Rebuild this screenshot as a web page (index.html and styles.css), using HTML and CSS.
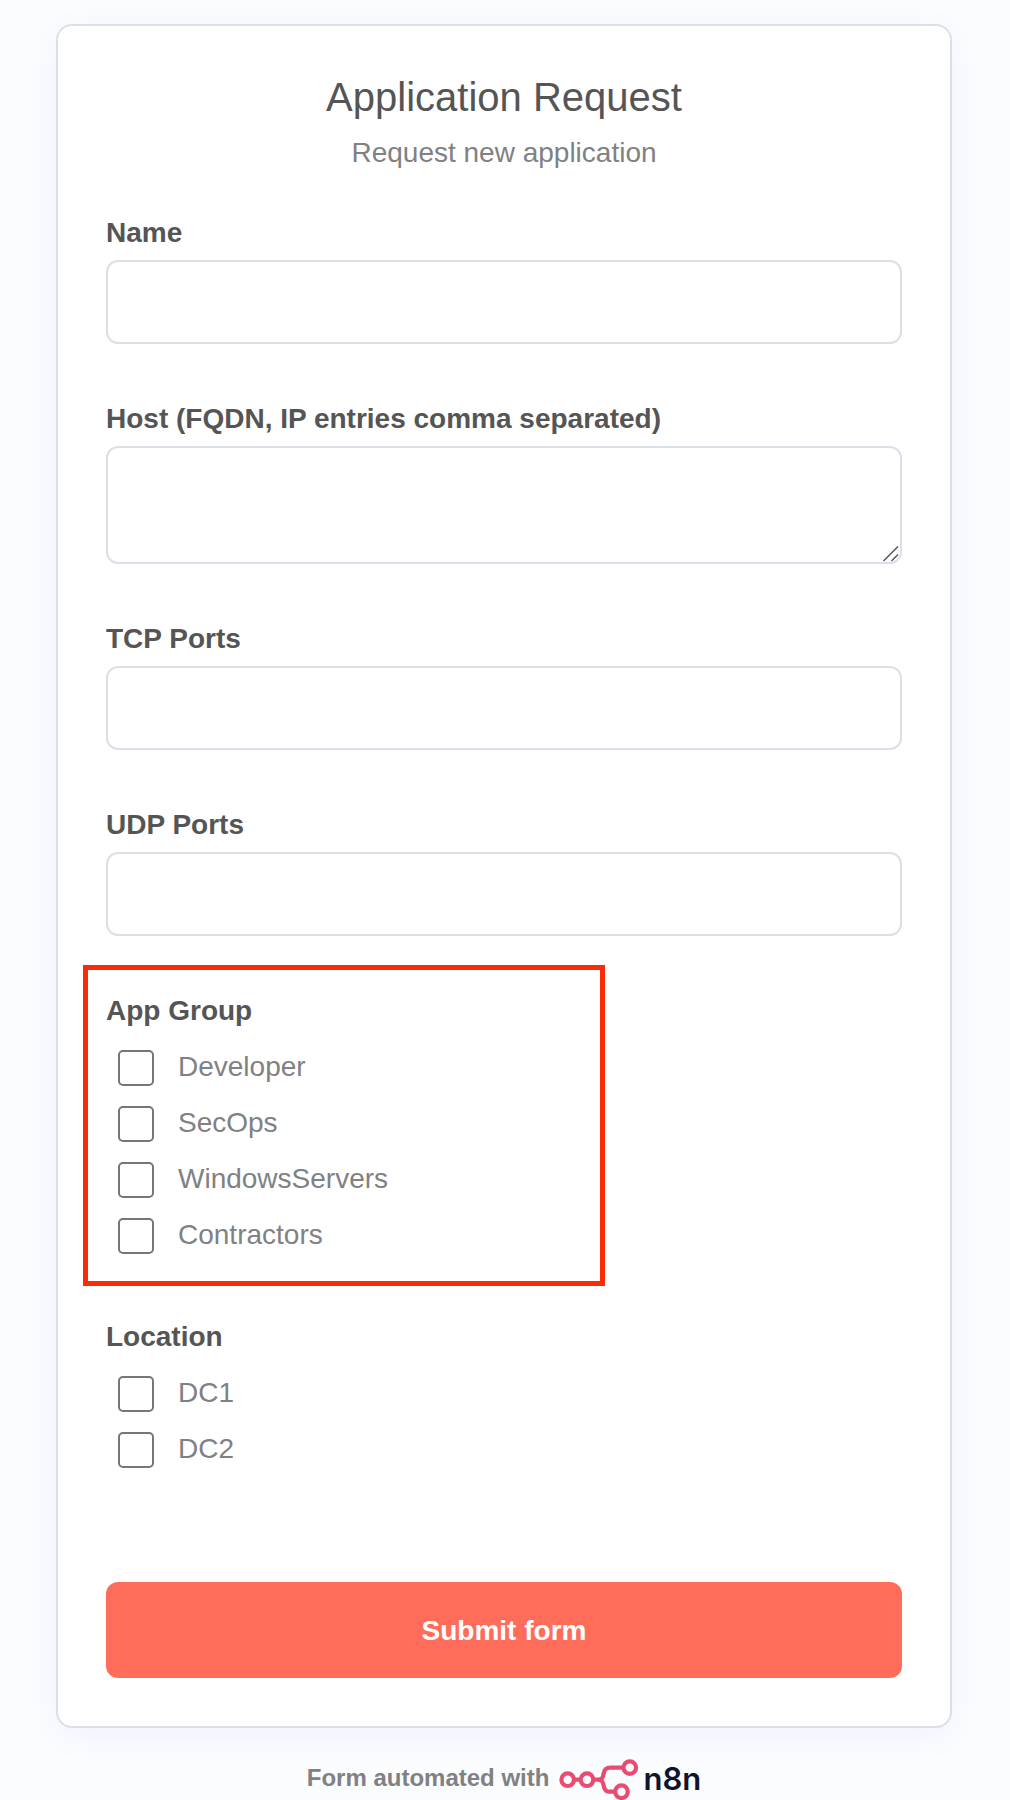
FILE: index.html
```html
<!DOCTYPE html>
<html lang="en">

<head>
    <meta charset="UTF-8">
    <meta name="viewport" content="width=device-width, initial-scale=1.0">
    <title>Application Request</title>
    <link rel="stylesheet" href="styles.css">
</head>

<body>
    <main class="container">
        <form class="card" action="#" method="post">
            <div class="form-header">
                <h1>Application Request</h1>
                <p>Request new application</p>
            </div>

            <div class="form-group">
                <label class="form-label" for="name">Name</label>
                <input class="form-input" type="text" id="name" name="name">
            </div>
            <div class="form-group">
                <label class="form-label" for="host">Host (FQDN, IP entries comma separated)</label>
                <textarea class="form-input form-textarea" id="host" name="host"></textarea>
            </div>
            <div class="form-group">
                <label class="form-label" for="tcp">TCP Ports</label>
                <input class="form-input" type="text" id="tcp" name="tcp">
            </div>
            <div class="form-group">
                <label class="form-label" for="udp">UDP Ports</label>
                <input class="form-input" type="text" id="udp" name="udp">
            </div>

            <div class="form-group highlight">
                <fieldset class="multiselect">
                    <legend class="form-label">App Group</legend>
                    <div class="options">
                        <div class="option">
                            <input type="checkbox" id="developer" name="group" value="Developer">
                            <label for="developer">Developer</label>
                        </div>
                        <div class="option">
                            <input type="checkbox" id="secops" name="group" value="SecOps">
                            <label for="secops">SecOps</label>
                        </div>
                        <div class="option">
                            <input type="checkbox" id="windows" name="group" value="WindowsServers">
                            <label for="windows">WindowsServers</label>
                        </div>
                        <div class="option">
                            <input type="checkbox" id="contractors" name="group" value="Contractors">
                            <label for="contractors">Contractors</label>
                        </div>
                    </div>
                </fieldset>
            </div>

            <div class="form-group">
                <fieldset class="multiselect">
                    <legend class="form-label">Location</legend>
                    <div class="options">
                        <div class="option">
                            <input type="checkbox" id="dc1" name="location" value="DC1">
                            <label for="dc1">DC1</label>
                        </div>
                        <div class="option">
                            <input type="checkbox" id="dc2" name="location" value="DC2">
                            <label for="dc2">DC2</label>
                        </div>
                    </div>
                </fieldset>
            </div>

            <button class="submit-btn" type="submit">Submit form</button>
        </form>

        <a class="n8n-link" href="#">
            <span class="n8n-text">Form automated with</span>
            <svg class="n8n-logo" width="80" height="42" viewBox="0 0 80 42" fill="none" stroke="#ea4b71" stroke-width="4.2" aria-hidden="true">
                <circle cx="8.7" cy="21.7" r="6.3" />
                <circle cx="28" cy="21.7" r="6.3" />
                <circle cx="70.8" cy="9.6" r="6.3" />
                <circle cx="62.5" cy="33.7" r="6.3" />
                <path d="M15 21.7H22M34 21.7H39.5C42.5 21.7 43.8 19.8 44.4 16.8L44.9 14.5C45.6 11.4 47.6 9.6 51 9.6H64.5" />
                <path d="M39.5 21.7C42.5 21.7 43.8 23.6 44.4 26.6L45 29C45.7 32 47.5 33.7 50.5 33.7H56.5" />
            </svg>
            <span class="n8n-name">n8n</span>
        </a>
    </main>
</body>

</html>
```
FILE: styles.css
```css
* {
    box-sizing: border-box;
    margin: 0;
    padding: 0;
}

body {
    background-color: #fbfcfe;
    color: #808183;
    font-family: "Liberation Sans", Arial, sans-serif;
    font-size: 28px;
    line-height: 34px;
}

.container {
    padding: 24px 58px 0 56px;
}

/* card */
.card {
    padding: 48px;
    background-color: #fff;
    border: 2px solid #dbdfe7;
    border-radius: 16px;
    box-shadow: 0 8px 32px rgba(99, 77, 255, 0.06);
}

.form-header {
    margin-bottom: 46px;
    text-align: center;
}

.form-header h1 {
    margin-bottom: 16px;
    color: #555;
    font-size: 40px;
    font-weight: 400;
    line-height: 46px;
}

/* fields */
.form-group {
    margin-bottom: 58px;
}

.form-label {
    display: block;
    margin-bottom: 10px;
    color: #555;
    font-weight: 700;
}

.form-input {
    display: block;
    width: 100%;
    height: 84px;
    padding: 24px;
    background-color: #fff;
    border: 2px solid #dbdfe7;
    border-radius: 12px;
    color: #555;
    font: inherit;
}

.form-textarea {
    height: 118px;
    /* resize grip */
    background-image: url("data:image/svg+xml,%3Csvg xmlns='http://www.w3.org/2000/svg' width='16' height='16' fill='none' stroke='%23555' stroke-width='1.5'%3E%3Cpath d='M.5 15L15 .5M8.5 15L15 8.5'/%3E%3C/svg%3E");
    background-position: right 1px bottom 0;
    background-repeat: no-repeat;
    resize: vertical;
}

.form-textarea::-webkit-resizer {
    background: transparent;
}

/* checkbox groups */
.multiselect {
    border: 0;
    padding-bottom: 8px;
}

.multiselect .form-label {
    margin-bottom: 22px;
}

.options {
    display: flex;
    flex-direction: column;
    gap: 20px;
    padding-left: 12px;
}

.option {
    display: flex;
    align-items: flex-start;
    gap: 24px;
}

.option input {
    appearance: none;
    width: 36px;
    height: 36px;
    background-color: #fff;
    border: 2px solid #767676;
    border-radius: 5px;
}

.option input:checked {
    background-color: #ff6d5a;
}

.highlight {
    position: relative;
}

.highlight::after {
    content: "";
    box-sizing: border-box;
    position: absolute;
    top: -29px;
    bottom: -24px;
    left: -23px;
    width: 522px;
    border: 5px solid #fb2b08;
    pointer-events: none;
}

.submit-btn {
    display: block;
    width: 100%;
    height: 96px;
    margin-top: 106px;
    padding-top: 2px;
    background-color: #ff6d5a;
    border: 0;
    border-radius: 12px;
    color: #fff;
    font: inherit;
    font-weight: 700;
    cursor: pointer;
}

/* footer link */
.n8n-link {
    display: flex;
    align-items: center;
    justify-content: center;
    margin-top: 30px;
    color: #808183;
    font-size: 24px;
    font-weight: 700;
    line-height: 28px;
    text-decoration: none;
}

.n8n-text {
    padding-bottom: 2px;
}

.n8n-logo {
    margin: 0 4px 0 10px;
}

.n8n-name {
    color: #101330;
    font-family: Inter, sans-serif;
    font-size: 31px;
    font-weight: 600;
    line-height: 36px;
}
```
